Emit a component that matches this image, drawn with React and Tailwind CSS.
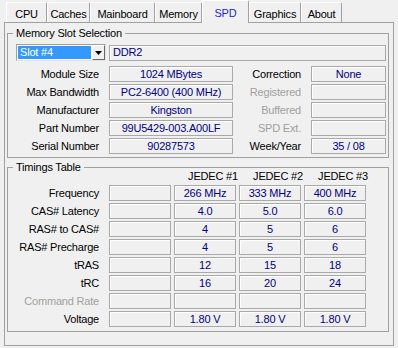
import React from 'react';

const tabs = [
  { name: 'CPU', w: 'w-[41px]' },
  { name: 'Caches', w: 'w-[43px]' },
  { name: 'Mainboard', w: 'w-[65px]' },
  { name: 'Memory', w: 'w-[47px]' },
  { name: 'SPD', w: 'w-[47px]', active: true },
  { name: 'Graphics', w: 'w-[52px]' },
  { name: 'About', w: 'w-[41px]' },
];

const slotRows = [
  { label: 'Module Size', value: '1024 MBytes', rlabel: 'Correction', rvalue: 'None' },
  { label: 'Max Bandwidth', value: 'PC2-6400 (400 MHz)', rlabel: 'Registered', off: true },
  { label: 'Manufacturer', value: 'Kingston', rlabel: 'Buffered', off: true },
  { label: 'Part Number', value: '99U5429-003.A00LF', rlabel: 'SPD Ext.', off: true },
  { label: 'Serial Number', value: '90287573', rlabel: 'Week/Year', rvalue: '35 / 08' },
];

const timings = [
  { label: 'Frequency', v: ['266 MHz', '333 MHz', '400 MHz'] },
  { label: 'CAS# Latency', v: ['4.0', '5.0', '6.0'] },
  { label: 'RAS# to CAS#', v: ['4', '5', '6'] },
  { label: 'RAS# Precharge', v: ['4', '5', '6'] },
  { label: 'tRAS', v: ['12', '15', '18'] },
  { label: 'tRC', v: ['16', '20', '24'] },
  { label: 'Command Rate', v: ['', '', ''], off: true },
  { label: 'Voltage', v: ['1.80 V', '1.80 V', '1.80 V'] },
];

// sunken value field
const Box = ({ children, className = '' }) => (
  <div className={`h-[16px] flex items-center justify-center border border-[#a9a9a9] shadow-[inset_1px_1px_0_#ffffff] text-[#000080] whitespace-nowrap ${className}`}>
    {children}
  </div>
);

const Group = ({ title, className = '', children }) => (
  <fieldset className={`w-[382px] border border-[#a0a0a0] ${className}`}>
    <legend className="ml-[5px] px-[3px] leading-[13px]">{title}</legend>
    {children}
  </fieldset>
);

export default function App() {
  return (
    <div className="w-[398px] h-[348px] bg-[#f0f0f0] font-['Liberation_Sans',Arial,sans-serif] text-[11px] tracking-[-0.2px] text-black select-none">
      {/* tabs */}
      <div className="flex items-end h-[22px] pl-[6px]">
        {tabs.map((t) =>
          t.active ? (
            <div
              key={t.name}
              className={`${t.w} h-[23px] -mb-px relative z-10 flex justify-center pt-[2px] items-center bg-[#f0f0f0] border-t border-l border-white border-r border-r-[#a0a0a0] rounded-t-[2px] text-[#1e1ed2]`}
            >
              {t.name}
            </div>
          ) : (
            <div
              key={t.name}
              className={`${t.w} h-[20px] flex justify-center items-center pt-[3px] border-t border-l border-white border-r border-r-[#a0a0a0] rounded-t-[2px]`}
            >
              {t.name}
            </div>
          )
        )}
      </div>

      {/* tab page */}
      <div className="ml-[4px] w-[390px] h-[324px] border border-[#a0a0a0] pt-[4px] pl-[2px]">
        <Group title="Memory Slot Selection" className="pb-[3px]">
          <div className="flex items-center mt-[4px] pl-[8px] h-[17px]">
            <div className="flex w-[90px] h-[17px] border border-t-[#a0a0a0] border-l-[#a0a0a0] border-r-[#e3e3e3] border-b-[#e3e3e3] bg-white">
              <div className="flex-1 m-[1px] bg-[#3399ff] text-white flex items-center pl-[2px]">Slot #4</div>
              <div className="w-[13px] flex items-center justify-center bg-[#f0f0f0] border border-t-white border-l-white border-r-[#696969] border-b-[#696969]">
                <svg width="7" height="4" viewBox="0 0 7 4">
                  <polygon points="0,0 7,0 3.5,4" fill="#000" />
                </svg>
              </div>
            </div>
            <Box className="ml-[3px] w-[277px] !justify-start pl-[3px]">DDR2</Box>
          </div>

          <div className="flex flex-col gap-[2px] mt-[5px]">
            {slotRows.map((r) => (
              <div key={r.label} className="flex items-center h-[16px]">
                <div className="w-[91px] text-right">{r.label}</div>
                <Box className="ml-[10px] w-[124px]">{r.value}</Box>
                <div className={`w-[68px] text-right ${r.off ? 'text-[#a0a0a0]' : ''}`}>{r.rlabel}</div>
                <Box className="ml-[10px] w-[75px]">{r.rvalue}</Box>
              </div>
            ))}
          </div>
        </Group>

        <Group title="Timings Table" className="mt-[3px] pb-[4px]">
          <div className="flex items-center h-[12px] -mt-[4px] pl-[174px] gap-[3px]">
            <div className="w-[62px] text-center">JEDEC #1</div>
            <div className="w-[62px] text-center">JEDEC #2</div>
            <div className="w-[62px] text-center">JEDEC #3</div>
          </div>
          <div className="flex flex-col gap-[2px] mt-[3px]">
            {timings.map((r) => (
              <div key={r.label} className="flex items-center h-[16px]">
                <div className={`w-[91px] text-right ${r.off ? 'text-[#a0a0a0]' : ''}`}>{r.label}</div>
                <div className="flex gap-[3px] ml-[10px]">
                  <Box className="w-[62px]" />
                  {r.v.map((v, i) => (
                    <Box key={i} className="w-[62px]">{v}</Box>
                  ))}
                </div>
              </div>
            ))}
          </div>
        </Group>
      </div>
    </div>
  );
}
